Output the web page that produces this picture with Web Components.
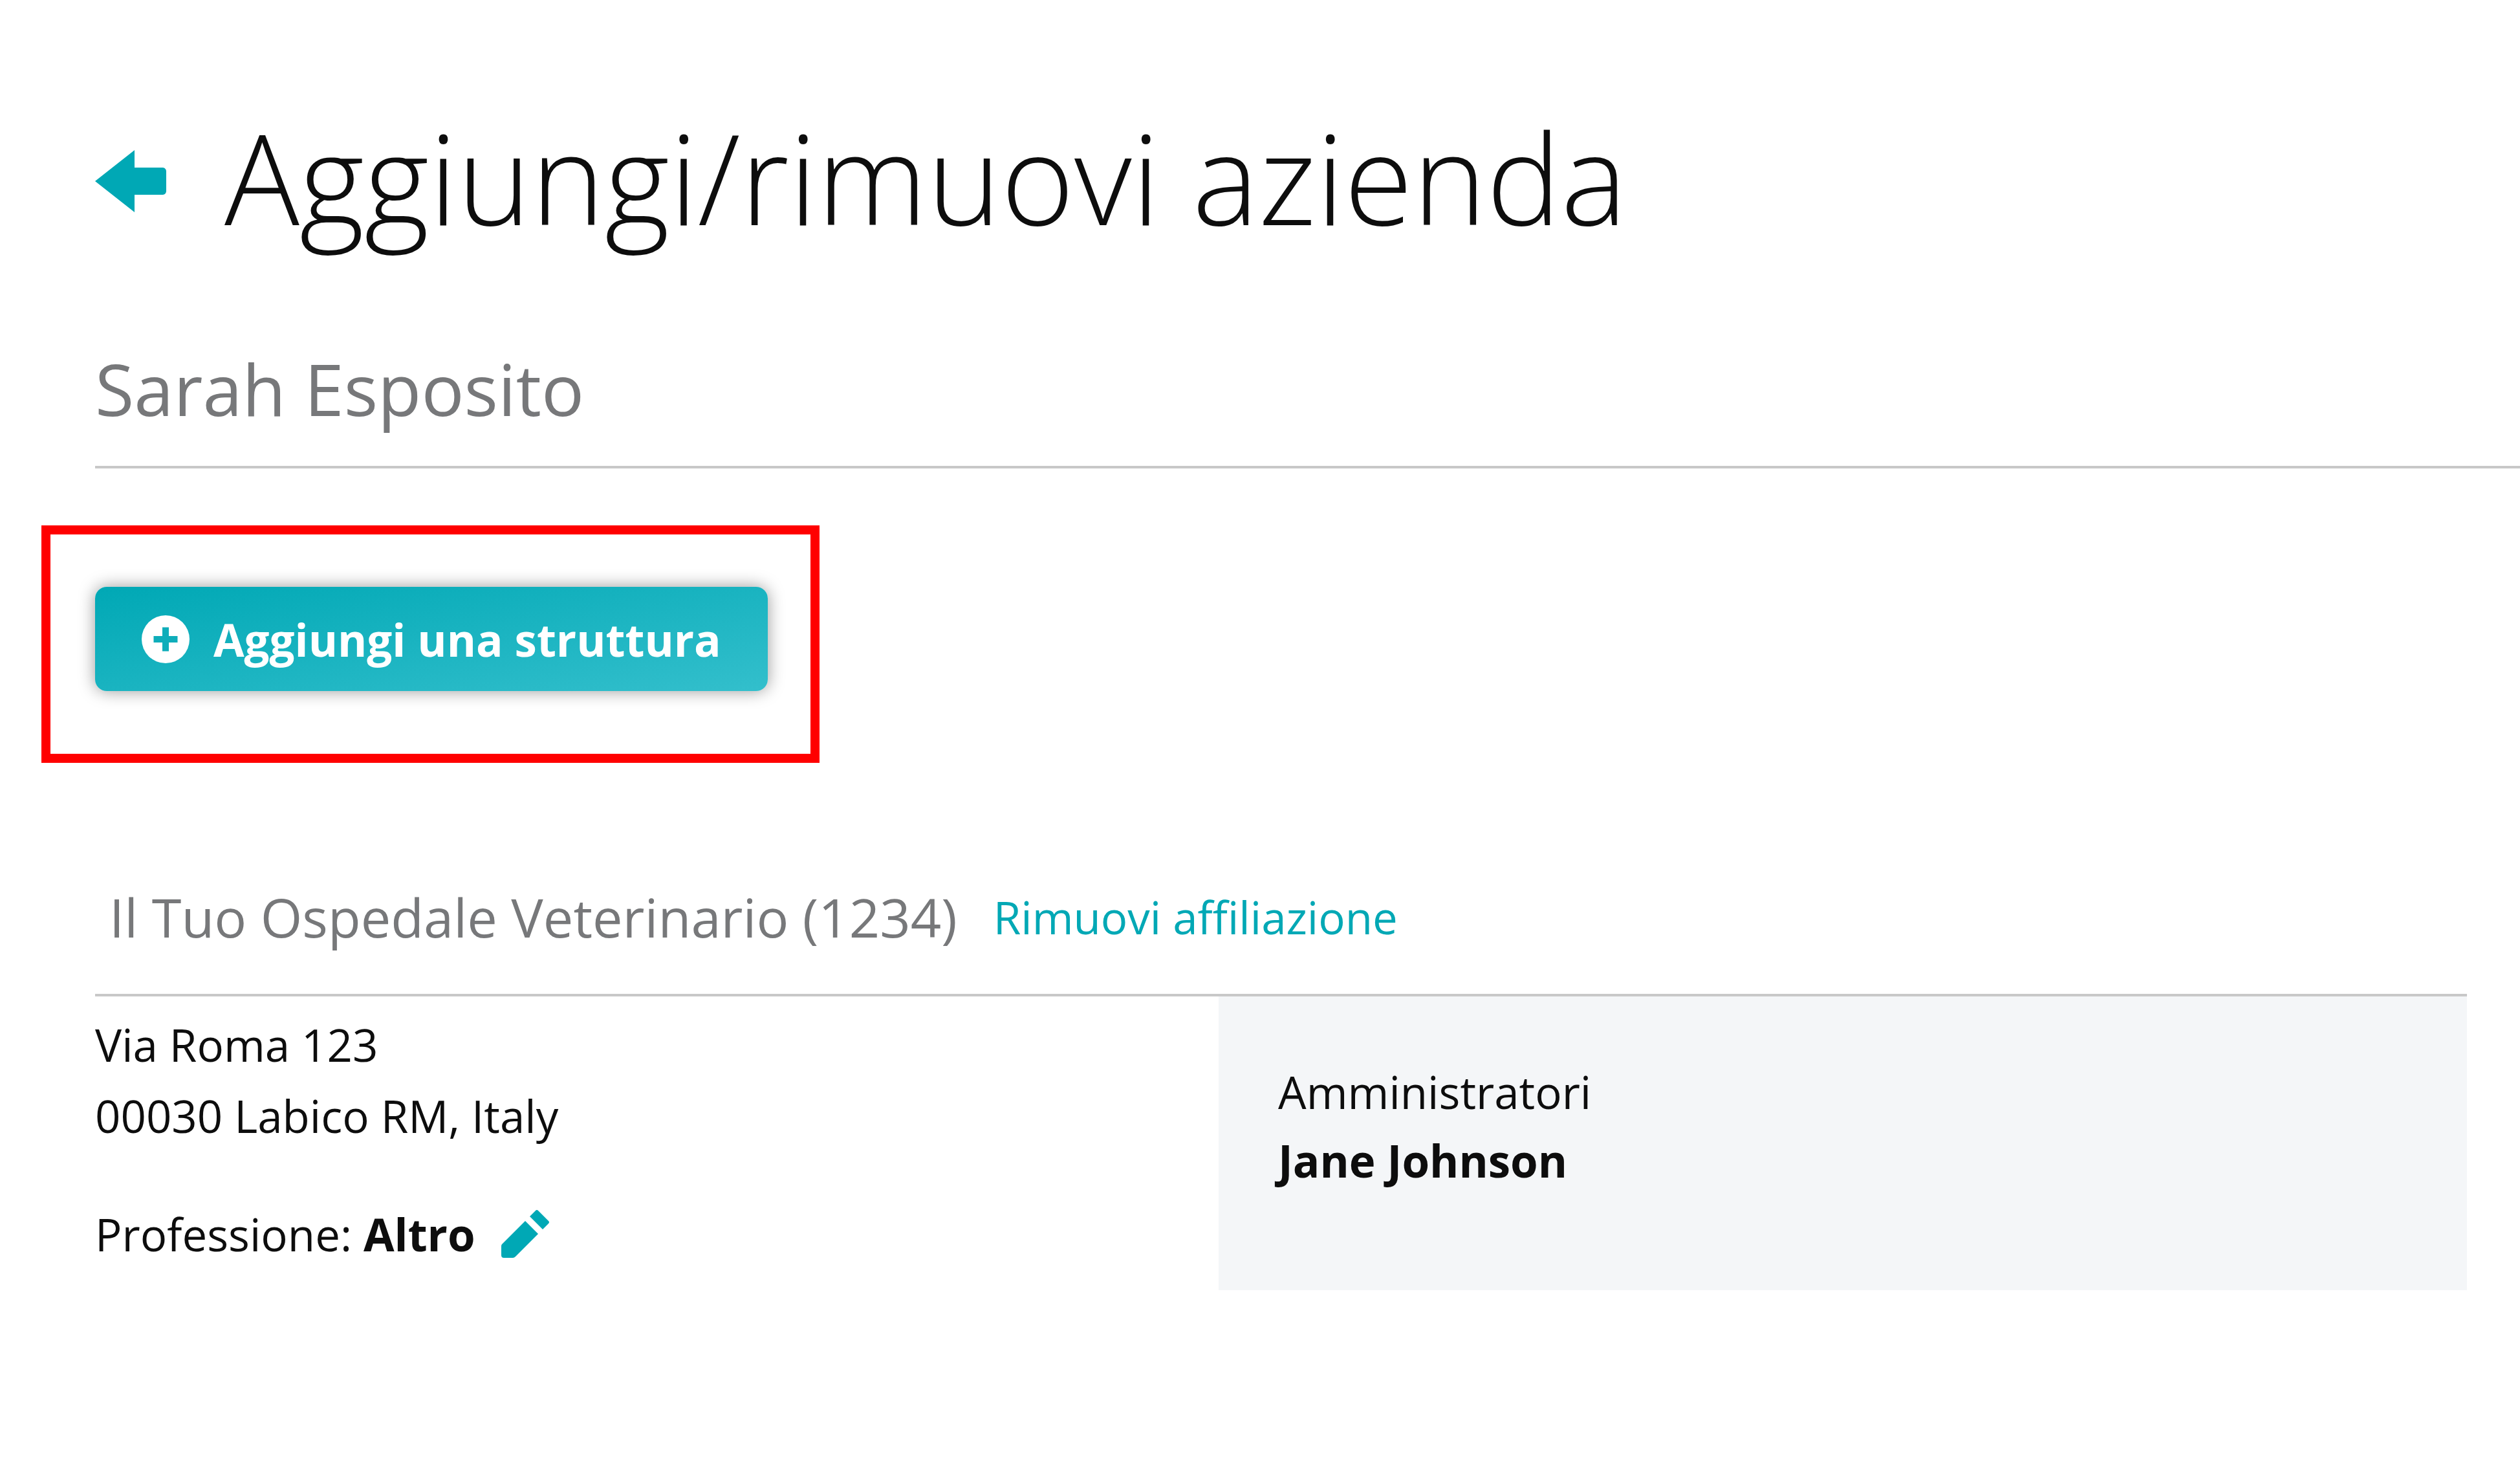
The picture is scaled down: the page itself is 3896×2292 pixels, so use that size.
<!DOCTYPE html>
<html lang="it"><head><meta charset="utf-8"><title>Aggiungi/rimuovi azienda</title>
<style>body{margin:0;background:#fff;color:#0d0d0d;font-family:"Open Sans",sans-serif;font-size:69px;line-height:110px}</style></head>
<body>
<affiliation-page></affiliation-page>
<script>
const define=(name,html)=>customElements.define(name,class extends HTMLElement{
 constructor(){super();this.attachShadow({mode:'open'}).innerHTML=html;}
});
define('page-heading',`<style>
:host{display:block}
header{display:flex;align-items:center;gap:90px}
a{display:flex;padding-top:12px;color:#00a8b5}svg{display:block;width:110px;height:96px}
h1{margin:0;font-size:193px;font-weight:300;line-height:276px;white-space:nowrap}
p{margin:0;padding:108px 0 40px;font-size:110px;line-height:160px;color:#77787a;border-bottom:4px solid #c8c8c8}
</style><header><a href="#" aria-label="Indietro"><svg viewBox="0 0 110 96"><path fill="currentColor" d="M0 48 61 0V27H105Q110 28 110 33V63Q110 68 105 69H61V96Z"/></svg></a><h1><slot></slot></h1></header><p><slot name="user"></slot></p>`);
define('add-button',`<style>
:host{display:block;width:fit-content;border:14px solid #f00;padding:81px 66px 97px 69px}
button{display:flex;align-items:center;gap:37px;height:161px;padding:0 72px;border:0;border-radius:18px;color:#fff;background:linear-gradient(to bottom right,#00a8b5,#33bfcc);box-shadow:0 0 26px #0006;font:700 69px/100px "Open Sans",sans-serif;white-space:nowrap}
svg{width:74px;height:74px}
</style><button type="button"><svg viewBox="0 0 74 74" aria-hidden="true"><circle cx="37" cy="37" r="37" fill="#fff"/><path d="M37 18.500V55.500M18.500 37H55.500" stroke="#0eadba" stroke-width="10"/></svg><slot></slot></button>`);
define('facility-card',`<style>
:host{display:block}
header{display:flex;align-items:center;gap:56px;padding:0 22px 59px;border-bottom:4px solid #c8c8c8;line-height:120px}
h2{margin:0;font-size:83px;font-weight:400;color:#77787a}
a{color:#00a8b5;text-decoration:none}
.body{display:grid;grid-template-columns:minmax(0,9fr) minmax(0,10fr)}
.info{padding-top:19px}address{font-style:normal}
.job{display:flex;align-items:center;gap:40px;margin-top:73px}
button{padding:0;border:0;background:none;color:#00a8b5;display:flex}
svg{width:74px;height:74px}
aside{background:#f4f6f8;padding:94px 92px 148px;line-height:106px}
</style><header><h2><slot name="name"></slot></h2><a href="#">Rimuovi affiliazione</a></header>
<div class="body"><div class="info"><address><slot name="address"></slot></address><div class="job"><span>Professione: <b><slot name="job"></slot></b></span><button type="button" aria-label="Modifica"><svg viewBox="0 0 74 74"><path fill="currentColor" d="M1 53 37 17 57 37 22 72Q20 74 18 74H4Q0 74 0 70V56Q0 54 1 53ZM44 10 53 1Q55-1 57 1L73 17Q75 19 73 21L64 30Z"/></svg></button></div></div>
<aside>Amministratori<br><b><slot name="admin"></slot></b></aside></div>`);
define('affiliation-page',`<style>
:host{display:block;padding:136px 0 0 147px}
add-button{margin:88px 0 178px -83px}
facility-card{margin-right:82px}
</style><main><page-heading>Aggiungi/rimuovi azienda<span slot="user">Sarah Esposito</span></page-heading>
<add-button>Aggiungi una struttura</add-button>
<facility-card><span slot="name">Il Tuo Ospedale Veterinario (1234)</span><span slot="address">Via Roma 123<br>00030 Labico RM, Italy</span><span slot="job">Altro</span><span slot="admin">Jane Johnson</span></facility-card></main>`);
</script></body></html>
